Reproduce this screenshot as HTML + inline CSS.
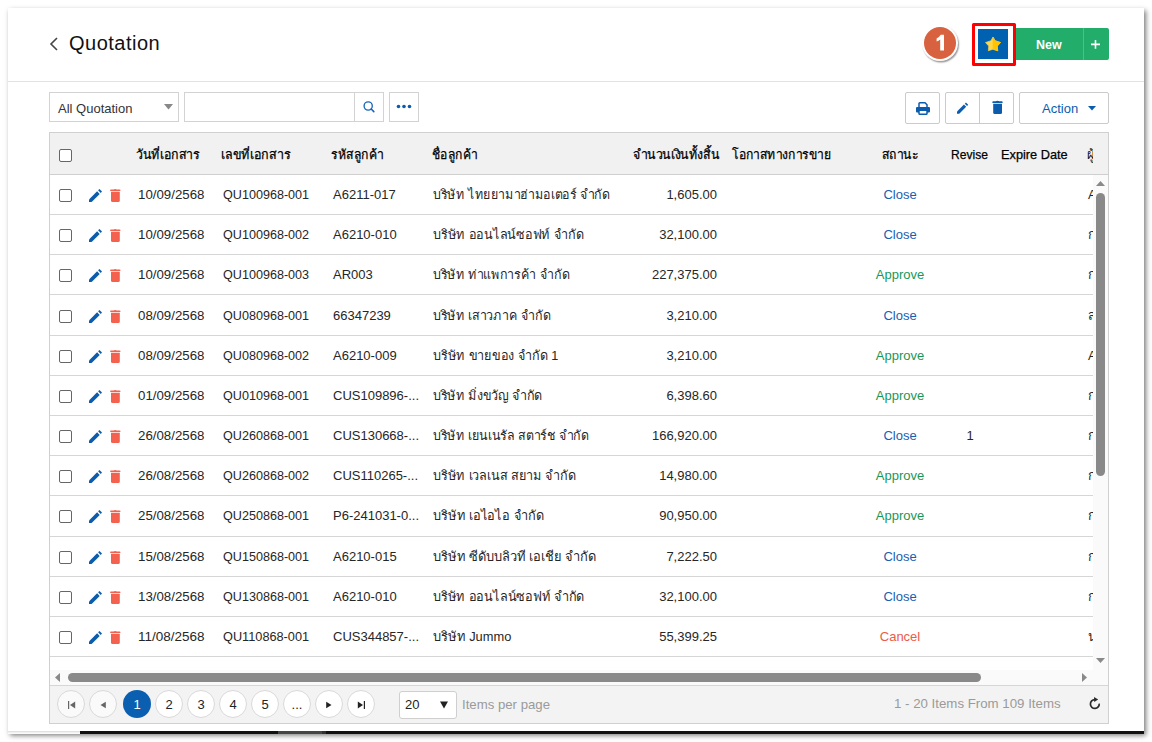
<!DOCTYPE html>
<html><head><meta charset="utf-8">
<style>
*{box-sizing:border-box;margin:0;padding:0}
html,body{width:1152px;height:742px;overflow:hidden;background:#fff;font-family:"Liberation Sans",sans-serif;color:#262626}
.abs{position:absolute}
#frame{position:absolute;left:8px;top:8px;width:1136px;height:726px;background:#fff;box-shadow:2px 1.5px 5px rgba(0,0,0,.52)}
#darkbar{position:absolute;left:80px;top:731px;width:1064px;height:3px;background:#111}
#lightbar{position:absolute;left:8px;top:731px;width:72px;height:3px;background:linear-gradient(#d8d8d8,#eee 40%,#fff)}
.t{position:absolute;white-space:nowrap;line-height:1;font-size:13px}
.f{transform-origin:0 0}
.cb{width:13px;height:13px;border:1px solid #666;border-radius:2px;background:#fff}
</style></head><body>
<div id="frame"></div>
<div id="lightbar"></div><div id="darkbar"></div><div class="abs" style="left:278px;top:731px;width:44px;height:3px;background:#454545"></div><div class="abs" style="left:322px;top:731px;width:4px;height:3px;background:#303030"></div>

<!-- header -->
<div class="abs" style="left:8px;top:81px;width:1136px;height:1px;background:#e2e2e2"></div>
<svg class="abs" style="left:48px;top:36px" width="12" height="16" viewBox="0 0 12 16"><path d="M9 2 L3 8 L9 14" fill="none" stroke="#444" stroke-width="1.6"/></svg>
<div class="t" style="left:69px;top:33px;font-size:20px;letter-spacing:.5px;color:#111">Quotation</div>


<!-- top right -->
<div class="abs" style="left:921.8px;top:24.8px;width:36.6px;height:36.6px;border-radius:50%;background:#fff;box-shadow:1px 1.5px 1.5px rgba(0,0,0,.4)"></div>
<div class="abs" style="left:924px;top:27px;width:32px;height:32px;border-radius:50%;background:#d8613f"></div>
<svg class="abs" style="left:930px;top:30px" width="20" height="24" viewBox="930 30 20 24"><path d="M944 34.8 V50.5 H940.2 V39.4 Q938.6 40.8 936.6 41.4 V38.4 Q939.2 37.4 940.8 34.8 Z" fill="#fff"/></svg>
<div class="abs" style="left:971.5px;top:22.6px;width:44px;height:43.8px;border:3.2px solid #f00;border-radius:1.5px"></div>
<div class="abs" style="left:978px;top:28.8px;width:30.2px;height:30.5px;background:#0061b0"></div>
<svg class="abs" style="left:984px;top:36px" width="18" height="16" viewBox="0 0 18 16"><path d="M9 1 L11.1 4.7 L16.5 6.5 L13.3 10 L13.7 14.8 L9 13.2 L4.3 14.8 L4.7 10 L1.5 6.5 L6.9 4.7 Z" fill="#ffd54a" stroke="#ffd54a" stroke-width=".6" stroke-linejoin="round"/><path d="M9 1 L11.1 4.7 L16.5 6.5 L13.3 10 L13.7 14.8 L9 13.2 Z" fill="#ffc400" stroke="#ffc400" stroke-width=".6" stroke-linejoin="round"/></svg>
<div class="abs" style="left:1015.5px;top:28.4px;width:93.5px;height:31.4px;background:#22ad6a;border-radius:0 2px 2px 0"></div>
<div class="abs" style="left:1083.3px;top:28.4px;width:1.2px;height:31.4px;background:#3cc985"></div>
<div class="t f" style="left:1036px;top:38px;--w:25.6;font-size:13px;font-weight:bold;color:#fff">New</div>
<svg class="abs" style="left:1088px;top:37px" width="15" height="15" viewBox="1088 37 15 15"><path d="M1091 44.4 H1100 M1095.5 40 V48.8" stroke="#fff" stroke-width="1.6"/></svg>

<!-- toolbar -->
<div class="abs" style="left:49px;top:92px;width:130px;height:30px;border:1px solid #d3d3d3;background:#fff"></div>
<div class="t" style="left:58px;top:102px;font-size:13px;color:#333">All Quotation</div>
<svg class="abs" style="left:164px;top:104px" width="9" height="6" viewBox="0 0 9 6"><path d="M0 0 H9 L4.5 5.5 Z" fill="#888"/></svg>
<div class="abs" style="left:184px;top:92px;width:200px;height:30px;border:1px solid #d3d3d3;background:#fff"></div>
<div class="abs" style="left:354px;top:92px;width:1px;height:30px;background:#d3d3d3"></div>
<svg class="abs" style="left:362px;top:100px" width="14" height="14" viewBox="362 100 14 14"><circle cx="368.2" cy="106" r="4.1" fill="none" stroke="#1a66b8" stroke-width="1.35"/><path d="M371.2 109 L373.8 111.6" stroke="#1a66b8" stroke-width="1.6" stroke-linecap="round"/></svg>
<div class="abs" style="left:389px;top:92px;width:30px;height:30px;border:1px solid #d3d3d3;background:#fff"></div>
<svg class="abs" style="left:396px;top:104px" width="16" height="5" viewBox="0 0 16 5"><circle cx="2.5" cy="2.5" r="1.8" fill="#0b5cad"/><circle cx="8" cy="2.5" r="1.8" fill="#0b5cad"/><circle cx="13.5" cy="2.5" r="1.8" fill="#0b5cad"/></svg>

<div class="abs" style="left:905px;top:92px;width:35px;height:32px;border:1px solid #cbcbcb;border-radius:2px;background:#fff"></div>
<svg class="abs" style="left:916px;top:102px" width="14" height="13" viewBox="0 0 14 13"><path d="M3 5 V1.5 Q3 0.8 3.8 0.8 H9 L11 2.8 V5" fill="none" stroke="#0b5cad" stroke-width="1.5"/><rect x="0" y="5" width="14" height="5.5" rx="1" fill="#0b5cad"/><rect x="3" y="8.2" width="8" height="4" rx="0.8" fill="#fff" stroke="#0b5cad" stroke-width="1.5"/></svg>
<div class="abs" style="left:945px;top:92px;width:69px;height:32px;border:1px solid #cbcbcb;border-radius:2px;background:#fff"></div>
<div class="abs" style="left:979px;top:92px;width:1px;height:32px;background:#cbcbcb"></div>
<svg class="abs" style="left:956px;top:102px" width="14" height="14" viewBox="956 102 14 14"><g transform="translate(957 102.6) scale(.86)"><path d="M0 10.4 L8.1 2.3 L10.7 4.9 L2.6 13 H0 Z" fill="#0b5cad"/><path d="M9.1 1.3 L10.4 0 L13 2.6 L11.7 3.9 Z" fill="#0b5cad"/></g></svg>
<svg class="abs" style="left:990px;top:99px" width="15" height="17" viewBox="990 99 15 17"><path d="M992.4 101.7 Q992.4 101.3 993 101.3 H995.8 Q996.3 100.8 997.5 100.8 Q998.7 100.8 999.2 101.3 H1002 Q1002.6 101.3 1002.6 101.7 V103 H992.4 Z" fill="#0b5cad"/><path d="M993.2 103.8 H1002 V112.5 Q1002 114 1000.5 114 H994.7 Q993.2 114 993.2 112.5 Z" fill="#0b5cad"/></svg>
<div class="abs" style="left:1019px;top:92px;width:90px;height:32px;border:1px solid #cbcbcb;border-radius:2px;background:#fff"></div>
<div class="t" style="left:1042px;top:102px;font-size:13px;color:#0b5cad">Action</div>
<svg class="abs" style="left:1088px;top:106px" width="8" height="5" viewBox="0 0 8 5"><path d="M0 0 H8 L4 4.5 Z" fill="#0b5cad"/></svg>
<!--TABLE-->
<div class="abs" style="left:49px;top:132px;width:1060px;height:592px;border:1px solid #d0d0d0;background:#fff"></div>
<div class="abs" style="left:50px;top:133px;width:1058px;height:41px;background:#f1f1f1"></div>
<div class="abs" style="left:50px;top:174px;width:1058px;height:1px;background:#cfcfcf"></div>
<div class="abs cb" style="left:59px;top:149px"></div>
<div id="hdrtext"><div class="t f" style="left:136.1px;top:148px;--w:63.8;color:#000;-webkit-text-stroke:.25px #000">วันที่เอกสาร</div><div class="t f" style="left:221.3px;top:148px;--w:69.3;color:#000;-webkit-text-stroke:.25px #000">เลขที่เอกสาร</div><div class="t f" style="left:331.2px;top:148px;--w:52.6;color:#000;-webkit-text-stroke:.25px #000">รหัสลูกค้า</div><div class="t f" style="left:431.7px;top:148px;--w:45.8;color:#000;-webkit-text-stroke:.25px #000">ชื่อลูกค้า</div><div class="t f" style="left:632.5px;top:148px;--w:86.2;color:#000;-webkit-text-stroke:.25px #000">จำนวนเงินทั้งสิ้น</div><div class="t f" style="left:731.8px;top:148px;--w:99.0;color:#000;-webkit-text-stroke:.25px #000">โอกาสทางการขาย</div><div class="t f" style="left:882.0px;top:148px;--w:36.4;color:#000;-webkit-text-stroke:.25px #000">สถานะ</div><div class="t f" style="left:951.3px;top:148px;--w:36.9;color:#000;-webkit-text-stroke:.25px #000">Revise</div><div class="t f" style="left:1001.1px;top:148px;--w:66.6;color:#000;-webkit-text-stroke:.25px #000">Expire Date</div></div>
<div class="abs" style="left:50px;top:175px;width:1043px;height:495px;overflow:hidden">
<div class="abs cb" style="left:9px;top:14px"></div>
<svg class="abs" style="left:39px;top:14px" width="13" height="13" viewBox="0 0 13 13"><path d="M0 10.4 L8.1 2.3 L10.7 4.9 L2.6 13 H0 Z" fill="#0b5cad"/><path d="M9.1 1.3 L10.4 0 L13 2.6 L11.7 3.9 Z" fill="#0b5cad"/></svg>
<svg class="abs" style="left:60px;top:14px" width="11" height="13" viewBox="0 0 11 13"><path d="M0.2 0.8 Q0.2 0.4 1 0.4 H3.5 Q4 0 5.2 0 Q6.4 0 6.9 0.4 H9.6 Q10.4 0.4 10.4 0.8 V2 H0.2 Z" fill="#f4614f"/><path d="M1 2.8 H9.8 V11.5 Q9.8 13 8.3 13 H2.5 Q1 13 1 11.5 Z" fill="#f4614f"/></svg>
<div class="t f" style="left:88.0px;top:13px;--w:66.5;">10/09/2568</div>
<div class="t f" style="left:172.7px;top:13px;--w:86.1;">QU100968-001</div>
<div class="t" style="left:283px;top:13px;">A6211-017</div>
<div class="t f" style="left:382.8px;top:13px;--w:176.5;">บริษัท ไทยยามาฮ่ามอเตอร์ จำกัด</div>
<div class="t" style="left:510px;width:157px;text-align:right;top:13px">1,605.00</div>
<div class="t" style="left:810px;width:80px;text-align:center;top:13px;color:#1a60b0">Close</div>
<div class="t" style="left:1038px;top:13px;">A</div>
<div class="abs" style="left:0;top:39px;width:1043px;height:1px;background:#d6d6d6"></div>
<div class="abs cb" style="left:9px;top:54px"></div>
<svg class="abs" style="left:39px;top:54px" width="13" height="13" viewBox="0 0 13 13"><path d="M0 10.4 L8.1 2.3 L10.7 4.9 L2.6 13 H0 Z" fill="#0b5cad"/><path d="M9.1 1.3 L10.4 0 L13 2.6 L11.7 3.9 Z" fill="#0b5cad"/></svg>
<svg class="abs" style="left:60px;top:54px" width="11" height="13" viewBox="0 0 11 13"><path d="M0.2 0.8 Q0.2 0.4 1 0.4 H3.5 Q4 0 5.2 0 Q6.4 0 6.9 0.4 H9.6 Q10.4 0.4 10.4 0.8 V2 H0.2 Z" fill="#f4614f"/><path d="M1 2.8 H9.8 V11.5 Q9.8 13 8.3 13 H2.5 Q1 13 1 11.5 Z" fill="#f4614f"/></svg>
<div class="t f" style="left:88.0px;top:53px;--w:66.5;">10/09/2568</div>
<div class="t f" style="left:172.7px;top:53px;--w:86.1;">QU100968-002</div>
<div class="t" style="left:283px;top:53px;">A6210-010</div>
<div class="t f" style="left:382.8px;top:53px;--w:150.7;">บริษัท ออนไลน์ซอฟท์ จำกัด</div>
<div class="t" style="left:510px;width:157px;text-align:right;top:53px">32,100.00</div>
<div class="t" style="left:810px;width:80px;text-align:center;top:53px;color:#1a60b0">Close</div>
<div class="t" style="left:1038px;top:53px;">ก</div>
<div class="abs" style="left:0;top:79px;width:1043px;height:1px;background:#d6d6d6"></div>
<div class="abs cb" style="left:9px;top:94px"></div>
<svg class="abs" style="left:39px;top:94px" width="13" height="13" viewBox="0 0 13 13"><path d="M0 10.4 L8.1 2.3 L10.7 4.9 L2.6 13 H0 Z" fill="#0b5cad"/><path d="M9.1 1.3 L10.4 0 L13 2.6 L11.7 3.9 Z" fill="#0b5cad"/></svg>
<svg class="abs" style="left:60px;top:94px" width="11" height="13" viewBox="0 0 11 13"><path d="M0.2 0.8 Q0.2 0.4 1 0.4 H3.5 Q4 0 5.2 0 Q6.4 0 6.9 0.4 H9.6 Q10.4 0.4 10.4 0.8 V2 H0.2 Z" fill="#f4614f"/><path d="M1 2.8 H9.8 V11.5 Q9.8 13 8.3 13 H2.5 Q1 13 1 11.5 Z" fill="#f4614f"/></svg>
<div class="t f" style="left:88.0px;top:93px;--w:66.5;">10/09/2568</div>
<div class="t f" style="left:172.7px;top:93px;--w:86.1;">QU100968-003</div>
<div class="t" style="left:283px;top:93px;">AR003</div>
<div class="t f" style="left:382.8px;top:93px;--w:136.2;">บริษัท ท่าแพการค้า จำกัด</div>
<div class="t" style="left:510px;width:157px;text-align:right;top:93px">227,375.00</div>
<div class="t" style="left:810px;width:80px;text-align:center;top:93px;color:#17985a">Approve</div>
<div class="t" style="left:1038px;top:93px;">ก</div>
<div class="abs" style="left:0;top:119px;width:1043px;height:1px;background:#d6d6d6"></div>
<div class="abs cb" style="left:9px;top:135px"></div>
<svg class="abs" style="left:39px;top:135px" width="13" height="13" viewBox="0 0 13 13"><path d="M0 10.4 L8.1 2.3 L10.7 4.9 L2.6 13 H0 Z" fill="#0b5cad"/><path d="M9.1 1.3 L10.4 0 L13 2.6 L11.7 3.9 Z" fill="#0b5cad"/></svg>
<svg class="abs" style="left:60px;top:135px" width="11" height="13" viewBox="0 0 11 13"><path d="M0.2 0.8 Q0.2 0.4 1 0.4 H3.5 Q4 0 5.2 0 Q6.4 0 6.9 0.4 H9.6 Q10.4 0.4 10.4 0.8 V2 H0.2 Z" fill="#f4614f"/><path d="M1 2.8 H9.8 V11.5 Q9.8 13 8.3 13 H2.5 Q1 13 1 11.5 Z" fill="#f4614f"/></svg>
<div class="t f" style="left:88.0px;top:134px;--w:66.5;">08/09/2568</div>
<div class="t f" style="left:172.7px;top:134px;--w:86.1;">QU080968-001</div>
<div class="t" style="left:283px;top:134px;">66347239</div>
<div class="t f" style="left:382.8px;top:134px;--w:117.4;">บริษัท เสาวภาค จำกัด</div>
<div class="t" style="left:510px;width:157px;text-align:right;top:134px">3,210.00</div>
<div class="t" style="left:810px;width:80px;text-align:center;top:134px;color:#1a60b0">Close</div>
<div class="t" style="left:1038px;top:134px;">ส</div>
<div class="abs" style="left:0;top:160px;width:1043px;height:1px;background:#d6d6d6"></div>
<div class="abs cb" style="left:9px;top:175px"></div>
<svg class="abs" style="left:39px;top:175px" width="13" height="13" viewBox="0 0 13 13"><path d="M0 10.4 L8.1 2.3 L10.7 4.9 L2.6 13 H0 Z" fill="#0b5cad"/><path d="M9.1 1.3 L10.4 0 L13 2.6 L11.7 3.9 Z" fill="#0b5cad"/></svg>
<svg class="abs" style="left:60px;top:175px" width="11" height="13" viewBox="0 0 11 13"><path d="M0.2 0.8 Q0.2 0.4 1 0.4 H3.5 Q4 0 5.2 0 Q6.4 0 6.9 0.4 H9.6 Q10.4 0.4 10.4 0.8 V2 H0.2 Z" fill="#f4614f"/><path d="M1 2.8 H9.8 V11.5 Q9.8 13 8.3 13 H2.5 Q1 13 1 11.5 Z" fill="#f4614f"/></svg>
<div class="t f" style="left:88.0px;top:174px;--w:66.5;">08/09/2568</div>
<div class="t f" style="left:172.7px;top:174px;--w:86.1;">QU080968-002</div>
<div class="t" style="left:283px;top:174px;">A6210-009</div>
<div class="t f" style="left:382.8px;top:174px;--w:125.2;">บริษัท ขายของ จำกัด 1</div>
<div class="t" style="left:510px;width:157px;text-align:right;top:174px">3,210.00</div>
<div class="t" style="left:810px;width:80px;text-align:center;top:174px;color:#17985a">Approve</div>
<div class="t" style="left:1038px;top:174px;">A</div>
<div class="abs" style="left:0;top:200px;width:1043px;height:1px;background:#d6d6d6"></div>
<div class="abs cb" style="left:9px;top:215px"></div>
<svg class="abs" style="left:39px;top:215px" width="13" height="13" viewBox="0 0 13 13"><path d="M0 10.4 L8.1 2.3 L10.7 4.9 L2.6 13 H0 Z" fill="#0b5cad"/><path d="M9.1 1.3 L10.4 0 L13 2.6 L11.7 3.9 Z" fill="#0b5cad"/></svg>
<svg class="abs" style="left:60px;top:215px" width="11" height="13" viewBox="0 0 11 13"><path d="M0.2 0.8 Q0.2 0.4 1 0.4 H3.5 Q4 0 5.2 0 Q6.4 0 6.9 0.4 H9.6 Q10.4 0.4 10.4 0.8 V2 H0.2 Z" fill="#f4614f"/><path d="M1 2.8 H9.8 V11.5 Q9.8 13 8.3 13 H2.5 Q1 13 1 11.5 Z" fill="#f4614f"/></svg>
<div class="t f" style="left:88.0px;top:214px;--w:66.5;">01/09/2568</div>
<div class="t f" style="left:172.7px;top:214px;--w:86.1;">QU010968-001</div>
<div class="t" style="left:283px;top:214px;">CUS109896-...</div>
<div class="t f" style="left:382.8px;top:214px;--w:109.2;">บริษัท มิ่งขวัญ จำกัด</div>
<div class="t" style="left:510px;width:157px;text-align:right;top:214px">6,398.60</div>
<div class="t" style="left:810px;width:80px;text-align:center;top:214px;color:#17985a">Approve</div>
<div class="t" style="left:1038px;top:214px;">ก</div>
<div class="abs" style="left:0;top:240px;width:1043px;height:1px;background:#d6d6d6"></div>
<div class="abs cb" style="left:9px;top:255px"></div>
<svg class="abs" style="left:39px;top:255px" width="13" height="13" viewBox="0 0 13 13"><path d="M0 10.4 L8.1 2.3 L10.7 4.9 L2.6 13 H0 Z" fill="#0b5cad"/><path d="M9.1 1.3 L10.4 0 L13 2.6 L11.7 3.9 Z" fill="#0b5cad"/></svg>
<svg class="abs" style="left:60px;top:255px" width="11" height="13" viewBox="0 0 11 13"><path d="M0.2 0.8 Q0.2 0.4 1 0.4 H3.5 Q4 0 5.2 0 Q6.4 0 6.9 0.4 H9.6 Q10.4 0.4 10.4 0.8 V2 H0.2 Z" fill="#f4614f"/><path d="M1 2.8 H9.8 V11.5 Q9.8 13 8.3 13 H2.5 Q1 13 1 11.5 Z" fill="#f4614f"/></svg>
<div class="t f" style="left:88.0px;top:254px;--w:66.5;">26/08/2568</div>
<div class="t f" style="left:172.7px;top:254px;--w:86.1;">QU260868-001</div>
<div class="t" style="left:283px;top:254px;">CUS130668-...</div>
<div class="t f" style="left:382.8px;top:254px;--w:155.6;">บริษัท เยนเนรัล สตาร์ช จำกัด</div>
<div class="t" style="left:510px;width:157px;text-align:right;top:254px">166,920.00</div>
<div class="t" style="left:810px;width:80px;text-align:center;top:254px;color:#1a60b0">Close</div>
<div class="t" style="left:900px;width:40px;text-align:center;top:254px">1</div>
<div class="t" style="left:1038px;top:254px;">ก</div>
<div class="abs" style="left:0;top:280px;width:1043px;height:1px;background:#d6d6d6"></div>
<div class="abs cb" style="left:9px;top:295px"></div>
<svg class="abs" style="left:39px;top:295px" width="13" height="13" viewBox="0 0 13 13"><path d="M0 10.4 L8.1 2.3 L10.7 4.9 L2.6 13 H0 Z" fill="#0b5cad"/><path d="M9.1 1.3 L10.4 0 L13 2.6 L11.7 3.9 Z" fill="#0b5cad"/></svg>
<svg class="abs" style="left:60px;top:295px" width="11" height="13" viewBox="0 0 11 13"><path d="M0.2 0.8 Q0.2 0.4 1 0.4 H3.5 Q4 0 5.2 0 Q6.4 0 6.9 0.4 H9.6 Q10.4 0.4 10.4 0.8 V2 H0.2 Z" fill="#f4614f"/><path d="M1 2.8 H9.8 V11.5 Q9.8 13 8.3 13 H2.5 Q1 13 1 11.5 Z" fill="#f4614f"/></svg>
<div class="t f" style="left:88.0px;top:294px;--w:66.5;">26/08/2568</div>
<div class="t f" style="left:172.7px;top:294px;--w:86.1;">QU260868-002</div>
<div class="t" style="left:283px;top:294px;">CUS110265-...</div>
<div class="t f" style="left:382.8px;top:294px;--w:142.6;">บริษัท เวลเนส สยาม จำกัด</div>
<div class="t" style="left:510px;width:157px;text-align:right;top:294px">14,980.00</div>
<div class="t" style="left:810px;width:80px;text-align:center;top:294px;color:#17985a">Approve</div>
<div class="t" style="left:1038px;top:294px;">ก</div>
<div class="abs" style="left:0;top:320px;width:1043px;height:1px;background:#d6d6d6"></div>
<div class="abs cb" style="left:9px;top:335px"></div>
<svg class="abs" style="left:39px;top:335px" width="13" height="13" viewBox="0 0 13 13"><path d="M0 10.4 L8.1 2.3 L10.7 4.9 L2.6 13 H0 Z" fill="#0b5cad"/><path d="M9.1 1.3 L10.4 0 L13 2.6 L11.7 3.9 Z" fill="#0b5cad"/></svg>
<svg class="abs" style="left:60px;top:335px" width="11" height="13" viewBox="0 0 11 13"><path d="M0.2 0.8 Q0.2 0.4 1 0.4 H3.5 Q4 0 5.2 0 Q6.4 0 6.9 0.4 H9.6 Q10.4 0.4 10.4 0.8 V2 H0.2 Z" fill="#f4614f"/><path d="M1 2.8 H9.8 V11.5 Q9.8 13 8.3 13 H2.5 Q1 13 1 11.5 Z" fill="#f4614f"/></svg>
<div class="t f" style="left:88.0px;top:334px;--w:66.5;">25/08/2568</div>
<div class="t f" style="left:172.7px;top:334px;--w:86.1;">QU250868-001</div>
<div class="t" style="left:283px;top:334px;">P6-241031-0...</div>
<div class="t f" style="left:382.8px;top:334px;--w:110.9;">บริษัท เอไอไอ จำกัด</div>
<div class="t" style="left:510px;width:157px;text-align:right;top:334px">90,950.00</div>
<div class="t" style="left:810px;width:80px;text-align:center;top:334px;color:#17985a">Approve</div>
<div class="t" style="left:1038px;top:334px;">ก</div>
<div class="abs" style="left:0;top:361px;width:1043px;height:1px;background:#d6d6d6"></div>
<div class="abs cb" style="left:9px;top:376px"></div>
<svg class="abs" style="left:39px;top:376px" width="13" height="13" viewBox="0 0 13 13"><path d="M0 10.4 L8.1 2.3 L10.7 4.9 L2.6 13 H0 Z" fill="#0b5cad"/><path d="M9.1 1.3 L10.4 0 L13 2.6 L11.7 3.9 Z" fill="#0b5cad"/></svg>
<svg class="abs" style="left:60px;top:376px" width="11" height="13" viewBox="0 0 11 13"><path d="M0.2 0.8 Q0.2 0.4 1 0.4 H3.5 Q4 0 5.2 0 Q6.4 0 6.9 0.4 H9.6 Q10.4 0.4 10.4 0.8 V2 H0.2 Z" fill="#f4614f"/><path d="M1 2.8 H9.8 V11.5 Q9.8 13 8.3 13 H2.5 Q1 13 1 11.5 Z" fill="#f4614f"/></svg>
<div class="t f" style="left:88.0px;top:375px;--w:66.5;">15/08/2568</div>
<div class="t f" style="left:172.7px;top:375px;--w:86.1;">QU150868-001</div>
<div class="t" style="left:283px;top:375px;">A6210-015</div>
<div class="t f" style="left:382.8px;top:375px;--w:163.0;">บริษัท ซีดับบลิวที เอเชีย จำกัด</div>
<div class="t" style="left:510px;width:157px;text-align:right;top:375px">7,222.50</div>
<div class="t" style="left:810px;width:80px;text-align:center;top:375px;color:#1a60b0">Close</div>
<div class="t" style="left:1038px;top:375px;">ก</div>
<div class="abs" style="left:0;top:401px;width:1043px;height:1px;background:#d6d6d6"></div>
<div class="abs cb" style="left:9px;top:416px"></div>
<svg class="abs" style="left:39px;top:416px" width="13" height="13" viewBox="0 0 13 13"><path d="M0 10.4 L8.1 2.3 L10.7 4.9 L2.6 13 H0 Z" fill="#0b5cad"/><path d="M9.1 1.3 L10.4 0 L13 2.6 L11.7 3.9 Z" fill="#0b5cad"/></svg>
<svg class="abs" style="left:60px;top:416px" width="11" height="13" viewBox="0 0 11 13"><path d="M0.2 0.8 Q0.2 0.4 1 0.4 H3.5 Q4 0 5.2 0 Q6.4 0 6.9 0.4 H9.6 Q10.4 0.4 10.4 0.8 V2 H0.2 Z" fill="#f4614f"/><path d="M1 2.8 H9.8 V11.5 Q9.8 13 8.3 13 H2.5 Q1 13 1 11.5 Z" fill="#f4614f"/></svg>
<div class="t f" style="left:88.0px;top:415px;--w:66.5;">13/08/2568</div>
<div class="t f" style="left:172.7px;top:415px;--w:86.1;">QU130868-001</div>
<div class="t" style="left:283px;top:415px;">A6210-010</div>
<div class="t f" style="left:382.8px;top:415px;--w:151.3;">บริษัท ออนไลน์ซอฟท์ จำกัด</div>
<div class="t" style="left:510px;width:157px;text-align:right;top:415px">32,100.00</div>
<div class="t" style="left:810px;width:80px;text-align:center;top:415px;color:#1a60b0">Close</div>
<div class="t" style="left:1038px;top:415px;">ก</div>
<div class="abs" style="left:0;top:441px;width:1043px;height:1px;background:#d6d6d6"></div>
<div class="abs cb" style="left:9px;top:456px"></div>
<svg class="abs" style="left:39px;top:456px" width="13" height="13" viewBox="0 0 13 13"><path d="M0 10.4 L8.1 2.3 L10.7 4.9 L2.6 13 H0 Z" fill="#0b5cad"/><path d="M9.1 1.3 L10.4 0 L13 2.6 L11.7 3.9 Z" fill="#0b5cad"/></svg>
<svg class="abs" style="left:60px;top:456px" width="11" height="13" viewBox="0 0 11 13"><path d="M0.2 0.8 Q0.2 0.4 1 0.4 H3.5 Q4 0 5.2 0 Q6.4 0 6.9 0.4 H9.6 Q10.4 0.4 10.4 0.8 V2 H0.2 Z" fill="#f4614f"/><path d="M1 2.8 H9.8 V11.5 Q9.8 13 8.3 13 H2.5 Q1 13 1 11.5 Z" fill="#f4614f"/></svg>
<div class="t f" style="left:88.0px;top:455px;--w:66.5;">11/08/2568</div>
<div class="t f" style="left:172.7px;top:455px;--w:86.1;">QU110868-001</div>
<div class="t" style="left:283px;top:455px;">CUS344857-...</div>
<div class="t f" style="left:382.8px;top:455px;--w:78.3;">บริษัท Jummo</div>
<div class="t" style="left:510px;width:157px;text-align:right;top:455px">55,399.25</div>
<div class="t" style="left:810px;width:80px;text-align:center;top:455px;color:#ec5b4a">Cancel</div>
<div class="t" style="left:1038px;top:455px;">น</div>
<div class="abs" style="left:0;top:481px;width:1043px;height:1px;background:#d6d6d6"></div>
</div>
<div class="abs" style="left:1080px;top:133px;width:13px;height:41px;overflow:hidden"><div class="t" style="left:7px;top:15px;color:#111">ผู้</div></div>
<!--/TABLE-->
<!--PAGER-->
<div class="abs" style="left:1093px;top:175px;width:15px;height:495px;background:#fafafa"></div>
<svg class="abs" style="left:1096px;top:181px" width="9" height="5" viewBox="0 0 9 5"><path d="M0 5 H9 L4.5 0 Z" fill="#898989"/></svg>
<div class="abs" style="left:1096px;top:193px;width:9px;height:283px;border-radius:4.5px;background:#898989"></div>
<svg class="abs" style="left:1096px;top:658px" width="9" height="5" viewBox="0 0 9 5"><path d="M0 0 H9 L4.5 5 Z" fill="#898989"/></svg>
<div class="abs" style="left:50px;top:670px;width:1058px;height:15px;background:#fafafa"></div>
<svg class="abs" style="left:55px;top:673px" width="5" height="9" viewBox="0 0 5 9"><path d="M5 0 V9 L0 4.5 Z" fill="#898989"/></svg>
<div class="abs" style="left:68px;top:673px;width:913px;height:9px;border-radius:4.5px;background:#898989"></div>
<svg class="abs" style="left:1082px;top:673px" width="5" height="9" viewBox="0 0 5 9"><path d="M0 0 V9 L5 4.5 Z" fill="#898989"/></svg>
<div class="abs" style="left:50px;top:685px;width:1058px;height:1px;background:#d6d6d6"></div>
<div class="abs" style="left:50px;top:686px;width:1058px;height:37px;background:#f3f3f3"></div>
<div class="abs" style="left:57px;top:690px;width:28px;height:28px;border-radius:50%;background:#fafafa;border:1px solid #d9d9d9"></div>
<svg class="abs" style="left:68px;top:701px" width="8" height="8" viewBox="0 0 8 8"><rect x="0" y="0" width="1.2" height="8" fill="#666"/><path d="M7.2 0.5 V7.5 L2 4 Z" fill="#666"/></svg>
<div class="abs" style="left:89px;top:690px;width:28px;height:28px;border-radius:50%;background:#fafafa;border:1px solid #d9d9d9"></div>
<svg class="abs" style="left:100px;top:701px" width="6" height="8" viewBox="0 0 6 8"><path d="M5.8 0.7 V7.3 L0.5 4 Z" fill="#666"/></svg>
<div class="abs" style="left:123px;top:690px;width:28px;height:28px;border-radius:50%;background:#0b5fb0"></div>
<div class="t" style="left:123px;width:28px;text-align:center;top:698px;color:#fff;font-size:13px">1</div>
<div class="abs" style="left:155px;top:690px;width:28px;height:28px;border-radius:50%;background:#fff;border:1px solid #d9d9d9"></div>
<div class="t" style="left:155px;width:28px;text-align:center;top:698px;color:#222;font-size:13px">2</div>
<div class="abs" style="left:187px;top:690px;width:28px;height:28px;border-radius:50%;background:#fff;border:1px solid #d9d9d9"></div>
<div class="t" style="left:187px;width:28px;text-align:center;top:698px;color:#222;font-size:13px">3</div>
<div class="abs" style="left:219px;top:690px;width:28px;height:28px;border-radius:50%;background:#fff;border:1px solid #d9d9d9"></div>
<div class="t" style="left:219px;width:28px;text-align:center;top:698px;color:#222;font-size:13px">4</div>
<div class="abs" style="left:251px;top:690px;width:28px;height:28px;border-radius:50%;background:#fff;border:1px solid #d9d9d9"></div>
<div class="t" style="left:251px;width:28px;text-align:center;top:698px;color:#222;font-size:13px">5</div>
<div class="abs" style="left:283px;top:690px;width:28px;height:28px;border-radius:50%;background:#fff;border:1px solid #d9d9d9"></div>
<div class="t" style="left:283px;width:28px;text-align:center;top:698px;color:#222;font-size:13px">...</div>
<div class="abs" style="left:315px;top:690px;width:28px;height:28px;border-radius:50%;background:#fff;border:1px solid #d9d9d9"></div>
<svg class="abs" style="left:326px;top:701px" width="6" height="8" viewBox="0 0 6 8"><path d="M0.2 0.7 V7.3 L5.5 4 Z" fill="#222"/></svg>
<div class="abs" style="left:347px;top:690px;width:28px;height:28px;border-radius:50%;background:#fff;border:1px solid #d9d9d9"></div>
<svg class="abs" style="left:357px;top:701px" width="8" height="8" viewBox="0 0 8 8"><path d="M0.8 0.5 V7.5 L6 4 Z" fill="#222"/><rect x="6.8" y="0" width="1.2" height="8" fill="#222"/></svg>
<div class="abs" style="left:399px;top:691px;width:58px;height:28px;border:1px solid #cfcfcf;border-radius:3px;background:#fff"></div>
<div class="t" style="left:405px;top:698px;color:#222;font-size:13px">20</div>
<svg class="abs" style="left:440px;top:701px" width="8" height="8" viewBox="0 0 8 8"><path d="M0 0.5 H8 L4 7.5 Z" fill="#222"/></svg>
<div class="t f" style="left:462.3px;top:698px;--w:88;color:#9a9a9a;font-size:13px">Items per page</div>
<div class="t f" style="left:894.1px;top:697px;--w:166.6;color:#9a9a9a;font-size:13px">1 - 20 Items From 109 Items</div>
<svg class="abs" style="left:1089px;top:696px" width="12" height="14" viewBox="0 0 12 14"><path d="M10.2 7.6 A4.4 4.4 0 1 1 5.8 3.6" fill="none" stroke="#2a2a2a" stroke-width="1.7"/><path d="M5 0.9 L9.2 3.5 L5.2 6 Z" fill="#2a2a2a"/></svg>
<!--/PAGER-->
<script>
document.querySelectorAll('.f').forEach(function(e){var w=parseFloat(e.style.getPropertyValue('--w'));var r=e.getBoundingClientRect().width;if(r>0)e.style.transform='scaleX('+(w/r)+')';});
</script>
</body></html>
